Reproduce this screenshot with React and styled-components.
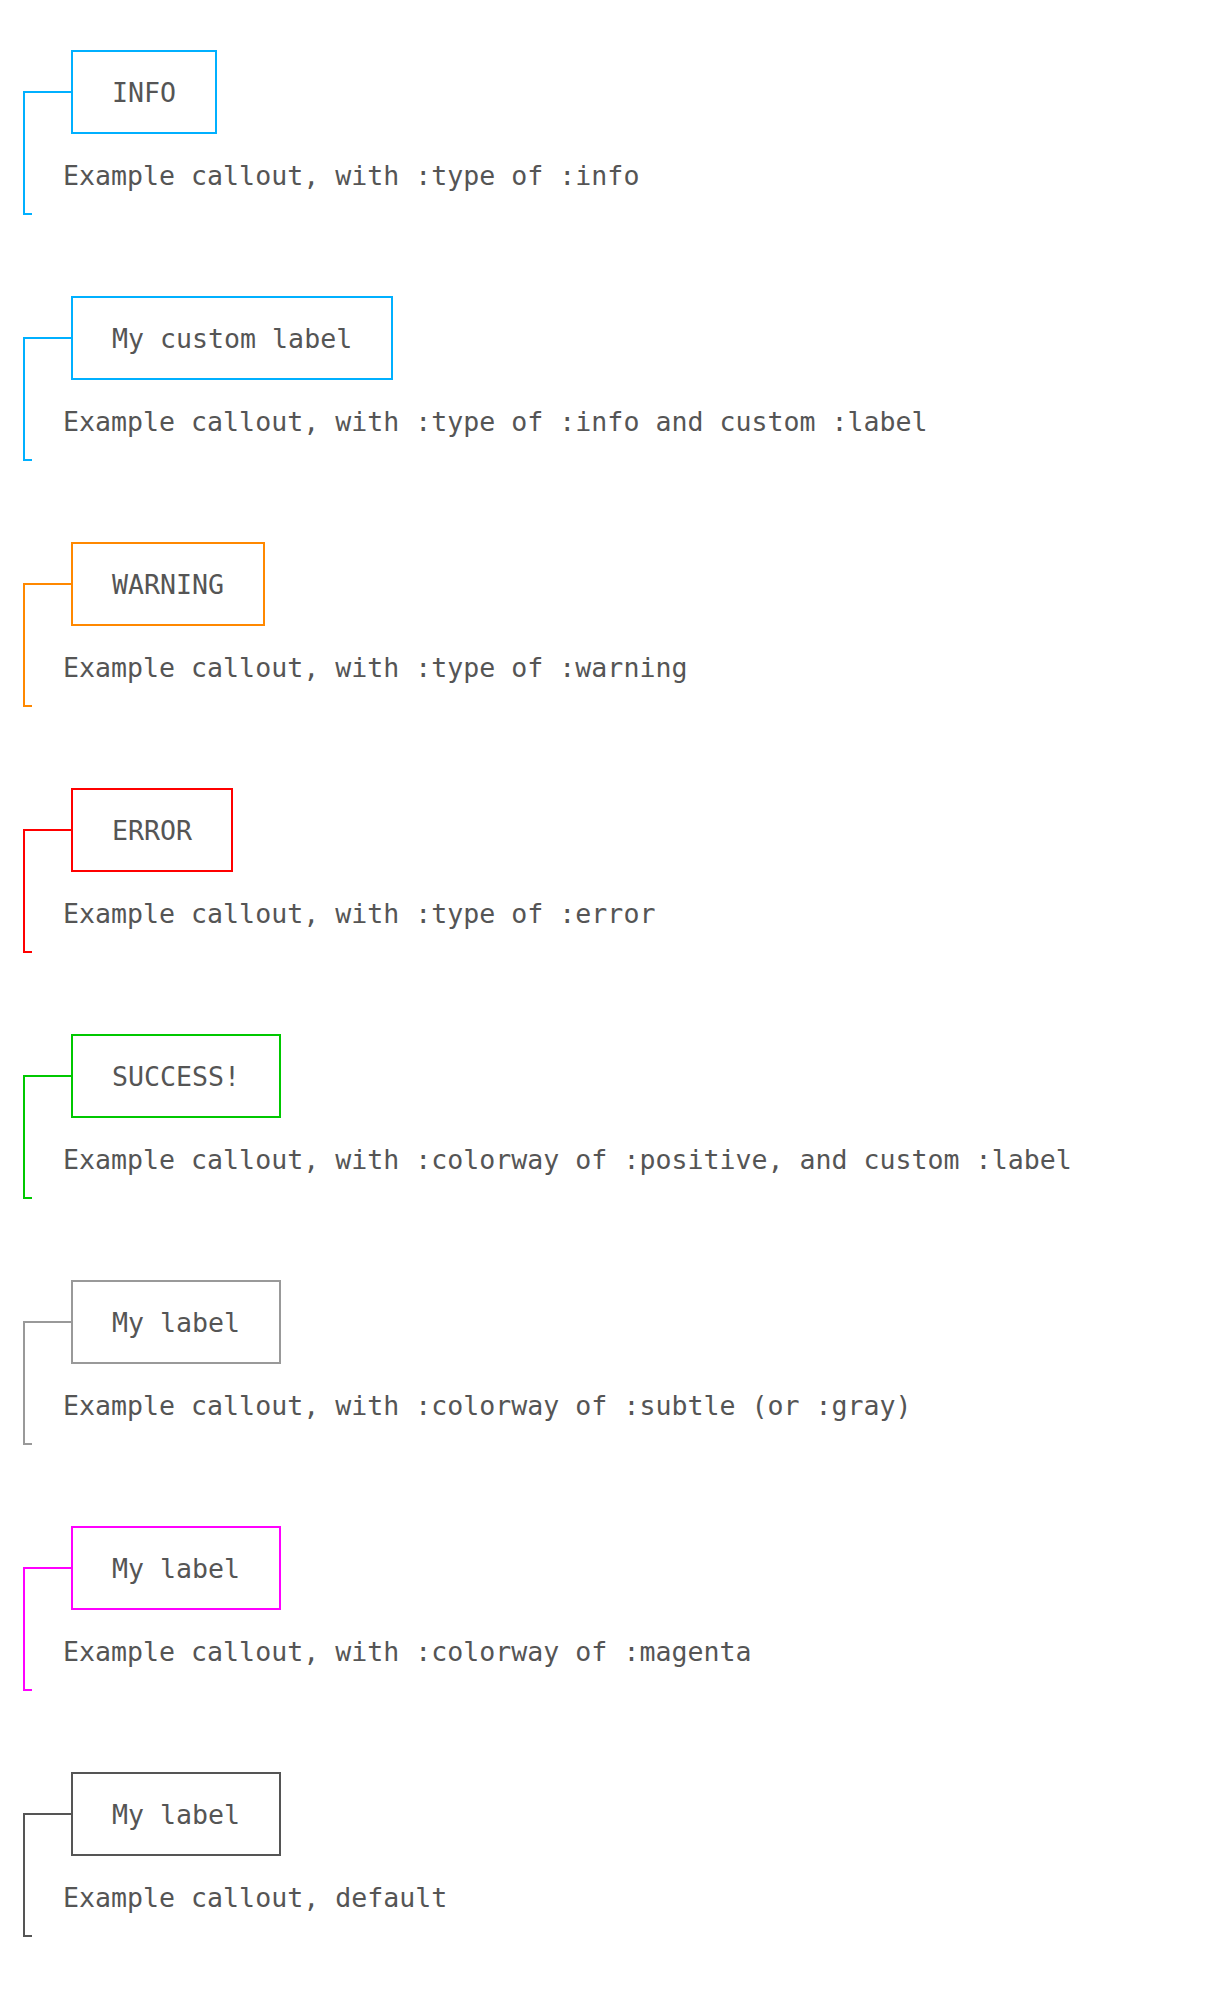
import React from 'react';
import styled, { createGlobalStyle } from 'styled-components';

const GlobalStyle = createGlobalStyle`
  body {
    background: #ffffff;
    margin: 0;
  }
`;

const colorways = {
  default: '#555555',
  error: '#ff0000',
  info: '#00b0ff',
  magenta: '#ff00ff',
  positive: '#00c800',
  subtle: '#999999',
  warning: '#ff8800'
};

const Page = styled.div`
  color: #555555;
  display: flex;
  flex-direction: column;
  font-family: "DejaVu Sans Mono", "Liberation Mono", monospace;
  font-size: 26.6px;
  gap: 81px;
  line-height: 40px;
  padding: 50px 0 60px 23px;
`;

const Callout = styled.section`
  display: flex;
  flex-direction: column;
`;

const Header = styled.div`
  align-items: stretch;
  display: flex;
  flex-direction: row;
`;

const Elbow = styled.div`
  display: flex;
  flex-direction: column;
  width: 48px;

  &::before {
    content: '';
    flex: 1;
  }

  &::after {
    border-left: 2px solid ${(props) => props.$color};
    border-top: 2px solid ${(props) => props.$color};
    content: '';
    flex: 1;
  }
`;

const Label = styled.div`
  border: 2px solid ${(props) => props.$color};
  padding: 21px 39px 19px;
  white-space: pre;
`;

const Body = styled.div`
  border-left: 2px solid ${(props) => props.$color};
  padding: 22px 0 0 38px;
  white-space: pre;
`;

const Foot = styled.div`
  border-bottom: 2px solid ${(props) => props.$color};
  border-left: 2px solid ${(props) => props.$color};
  height: 17px;
  width: 7px;
`;

const ExampleCallout = ({ colorway, label, children }) => {
  const color = colorways[colorway];

  return <Callout>
    <Header>
      <Elbow $color={color}/>
      <Label $color={color}>{label}</Label>
    </Header>
    <Body $color={color}>{children}</Body>
    <Foot $color={color}/>
  </Callout>;
};

const callouts = [
  { colorway: 'info', label: 'INFO', text: 'Example callout, with :type of :info' },
  { colorway: 'info', label: 'My custom label', text: 'Example callout, with :type of :info and custom :label' },
  { colorway: 'warning', label: 'WARNING', text: 'Example callout, with :type of :warning' },
  { colorway: 'error', label: 'ERROR', text: 'Example callout, with :type of :error' },
  { colorway: 'positive', label: 'SUCCESS!', text: 'Example callout, with :colorway of :positive, and custom :label' },
  { colorway: 'subtle', label: 'My label', text: 'Example callout, with :colorway of :subtle (or :gray)' },
  { colorway: 'magenta', label: 'My label', text: 'Example callout, with :colorway of :magenta' },
  { colorway: 'default', label: 'My label', text: 'Example callout, default' }
];

const App = () => <>
  <GlobalStyle/>
  <Page>
    {callouts.map((callout, index) => <ExampleCallout
      colorway={callout.colorway}
      key={index}
      label={callout.label}
    >
      {callout.text}
    </ExampleCallout>)}
  </Page>
</>;

export default App;
